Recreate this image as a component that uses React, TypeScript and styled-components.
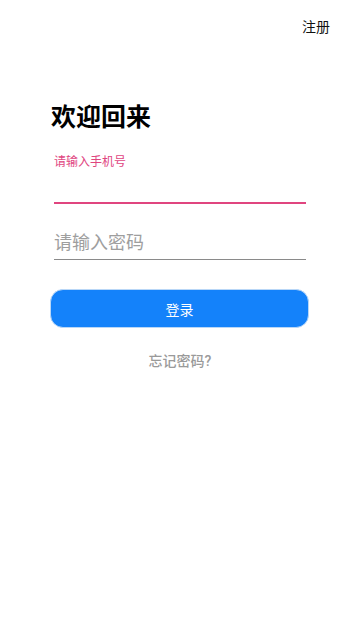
import React from "react";
import styled, { createGlobalStyle } from "styled-components";

const Global = createGlobalStyle`
  html, body { margin: 0; padding: 0; background: #fff; }
  body { font-family: Roboto, "Noto Sans CJK SC", sans-serif; }
  * { box-sizing: border-box; }
`;

const Page = styled.div`
  width: 360px;
  height: 640px;
  background: #fff;
  display: flex;
  flex-direction: column;
`;

const TopBar = styled.div`
  height: 56px;
  display: flex;
  justify-content: flex-end;
  align-items: center;
  padding-right: 30px;
  padding-bottom: 4px;
`;

const TopAction = styled.span`
  font-size: 14px;
  color: #111;
`;

const Body = styled.div`
  display: flex;
  flex-direction: column;
  padding: 44px 51px 0 51px;
`;

const Title = styled.h1`
  margin: 0;
  font-size: 25px;
  font-weight: 700;
  line-height: 36px;
  color: #000;
`;

const Field = styled.div<{ $active?: boolean }>`
  margin-left: 3px;
  margin-right: 3px;
  display: flex;
  flex-direction: column;
  border-bottom: ${(p) => (p.$active ? "2px solid #e0457f" : "1px solid #8a8a8a")};
`;

const FloatLabel = styled.div`
  font-size: 12px;
  color: #e0457f;
  line-height: 16px;
  margin-top: 18px;
  height: 48px;
`;

const Placeholder = styled.div`
  font-size: 18px;
  color: #9e9e9e;
  line-height: 24px;
  padding-bottom: 4px;
  margin-top: 27px;
`;

const LoginButton = styled.button`
  margin-top: 29px;
  height: 39px;
  width: 259px;
  margin-left: -1px;
  border-radius: 13px;
  border: 1px solid #b9d7f7;
  background: #1482fa;
  color: #fff;
  font-size: 14px;
  font-family: inherit;
  display: flex;
  align-items: center;
  justify-content: center;
`;

const Forgot = styled.div`
  margin-top: 22px;
  text-align: center;
  font-size: 14px;
  font-weight: 500;
  color: #9a9a9a;
`;

export default function App() {
  return (
    <Page>
      <Global />
      <TopBar>
        <TopAction>注册</TopAction>
      </TopBar>
      <Body>
        <Title>欢迎回来</Title>
        <Field $active>
          <FloatLabel>请输入手机号</FloatLabel>
        </Field>
        <Field>
          <Placeholder>请输入密码</Placeholder>
        </Field>
        <LoginButton>登录</LoginButton>
        <Forgot>忘记密码?</Forgot>
      </Body>
    </Page>
  );
}
